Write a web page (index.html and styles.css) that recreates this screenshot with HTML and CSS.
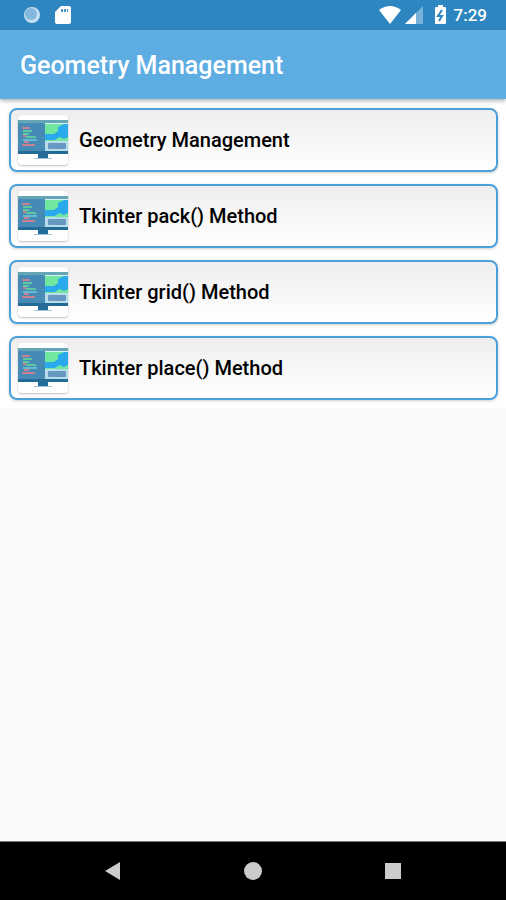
FILE: index.html
```html
<!DOCTYPE html>
<html lang="en">
  <head>
    <meta charset="UTF-8" />
    <meta name="viewport" content="width=device-width, initial-scale=1.0" />
    <title>Geometry Management</title>
    <link rel="stylesheet" href="styles.css">
  </head>
  <body>
    <svg class="defs" aria-hidden="true">
      <symbol id="monitor" viewBox="0 0 50 50">
        <rect width="50" height="50" rx="4" fill="#fff" />
        <path d="M0 5h50v33H0z" fill="#458bb6" />
        <path d="M0 5h50v3H0z" fill="#65a5b5" />
        <path d="M0 36h50v3H0z" fill="#246b96" />
        <path d="M27 8h23v9H27z" fill="#d8f3f6" />
        <path d="M27 9h23v17H27z" fill="#71e6a0" />
        <path d="M27 19h9l4-3V12l6-3h4v13l-4 2-5-2-4 3H27z" fill="#2aa9ed" />
        <path d="M27 26h23v10H27z" fill="#b9dcea" />
        <rect x="30" y="28" width="18" height="6" rx="1" fill="#6599c3" />
        <path d="M4 13h8M5 21h3M4 30h13M6 27h5" stroke="#c77f94" stroke-width="2" />
        <path d="M5 16h9M5 19h6M8 22h10" stroke="#60c7a0" stroke-width="2" />
        <path d="M5 25h14" stroke="#65b8d1" stroke-width="2" />
        <path d="M20 39h10v4H20z" fill="#236b98" />
        <path d="M16 43h18v1H16z" fill="#9fc5d8" />
      </symbol>
    </svg>

    <div class="status-bar">
      <div class="status-group">
        <svg width="18" height="18" viewBox="0 0 18 18">
          <circle cx="9" cy="9" r="8" fill="#c5dff1" />
          <circle cx="8" cy="8" r="6" fill="#83b7de" />
        </svg>
        <svg width="16" height="20" viewBox="0 0 16 20">
          <path d="M6 1h8q2 0 2 2v14q0 2-2 2H2q-2 0-2-2V7z" fill="#fff" />
          <path d="M6 4h2v3H6zM9 4h2v3H9zM12 4h1v3h-1z" fill="#4b91c4" />
        </svg>
      </div>
      <div class="status-group status-right">
        <svg width="22" height="18" viewBox="0 0 22 18">
          <path d="M0 4Q11-4 22 4L11 18z" fill="#fff" />
        </svg>
        <svg width="18" height="18" viewBox="0 0 18 18">
          <path d="M18 0v18H0z" fill="#77b1d9" />
          <path d="M11 7v11H0z" fill="#fff" />
        </svg>
        <svg class="battery" width="11" height="20" viewBox="0 0 11 20">
          <path d="M3 0h5v2h2q1 0 1 1v15q0 1-1 1H1q-1 0-1-1V3q0-1 1-1h2z" fill="#fff" />
          <path d="M7 5L3 11h4l-3 5" fill="none" stroke="#2e86c1" stroke-width="2" />
        </svg>
        <span class="time">7:29</span>
      </div>
    </div>

    <header class="app-bar">
      <h1>Geometry Management</h1>
    </header>

    <main>
      <div class="list">
        <button class="card"><svg class="icon"><use href="#monitor" /></svg>Geometry Management</button>
        <button class="card"><svg class="icon"><use href="#monitor" /></svg>Tkinter pack() Method</button>
        <button class="card"><svg class="icon"><use href="#monitor" /></svg>Tkinter grid() Method</button>
        <button class="card"><svg class="icon"><use href="#monitor" /></svg>Tkinter place() Method</button>
      </div>
    </main>

    <nav class="nav-bar">
      <button class="nav-btn" aria-label="Back">
        <svg width="18" height="18" viewBox="0 0 18 18"><path d="M16 0v18L1 9z" /></svg>
      </button>
      <button class="nav-btn" aria-label="Home">
        <svg width="18" height="18" viewBox="0 0 18 18"><circle cx="9" cy="9" r="9" /></svg>
      </button>
      <button class="nav-btn" aria-label="Recent apps">
        <svg width="18" height="18" viewBox="0 0 18 18"><path d="M1 1h16v16H1z" /></svg>
      </button>
    </nav>
  </body>
</html>
```
FILE: styles.css
```css
* {
  box-sizing: border-box;
}

body {
  display: flex;
  flex-direction: column;
  min-height: 100vh;
  margin: 0;
  background: #fafafa;
  font-family: Roboto, sans-serif;
}

svg {
  display: block;
}

.defs {
  display: none;
}

.status-bar {
  display: flex;
  justify-content: space-between;
  align-items: center;
  height: 30px;
  padding: 0 19px 0 23px;
  background: #2e86c1;
}

.status-group {
  display: flex;
  align-items: center;
  gap: 14px;
}

.status-right {
  gap: 4px;
}

.battery {
  margin: 0 4px 0 8px;
}

.time {
  color: #fff;
  font-size: 17px;
  font-weight: 500;
  line-height: 30px;
}

.app-bar {
  position: relative;
  padding: 21px 20px 18px;
  background: #5dade2;
  box-shadow: 0 2px 4px rgba(0, 0, 0, 0.3);
}

h1 {
  margin: 0;
  color: #fff;
  font-size: 25px;
  font-weight: 500;
  line-height: 30px;
}

main {
  flex: 1;
}

.list {
  display: flex;
  flex-direction: column;
  gap: 12px;
  padding: 9px 8px 8px 9px;
  background: #fff;
}

.card {
  display: flex;
  align-items: center;
  gap: 11px;
  height: 64px;
  padding: 0 7px;
  border: 2px solid #4c9fd8;
  border-radius: 8px;
  background: linear-gradient(#eee, #fff);
  box-shadow: 0 1px 3px rgba(0, 0, 0, 0.2);
  color: #000;
  font-family: inherit;
  font-size: 20px;
  font-weight: 500;
  text-align: left;
  cursor: pointer;
}

.icon {
  width: 50px;
  height: 50px;
  border-radius: 4px;
  box-shadow: 0 1px 2px rgba(0, 0, 0, 0.25);
}

.nav-bar {
  display: flex;
  justify-content: center;
  gap: 92px;
  padding: 5px 0;
  border-top: 1px solid #777;
  background: #000;
}

.nav-btn {
  display: flex;
  justify-content: center;
  align-items: center;
  width: 48px;
  height: 48px;
  padding: 0;
  border: none;
  background: none;
  fill: #ccc;
  cursor: pointer;
}
```
